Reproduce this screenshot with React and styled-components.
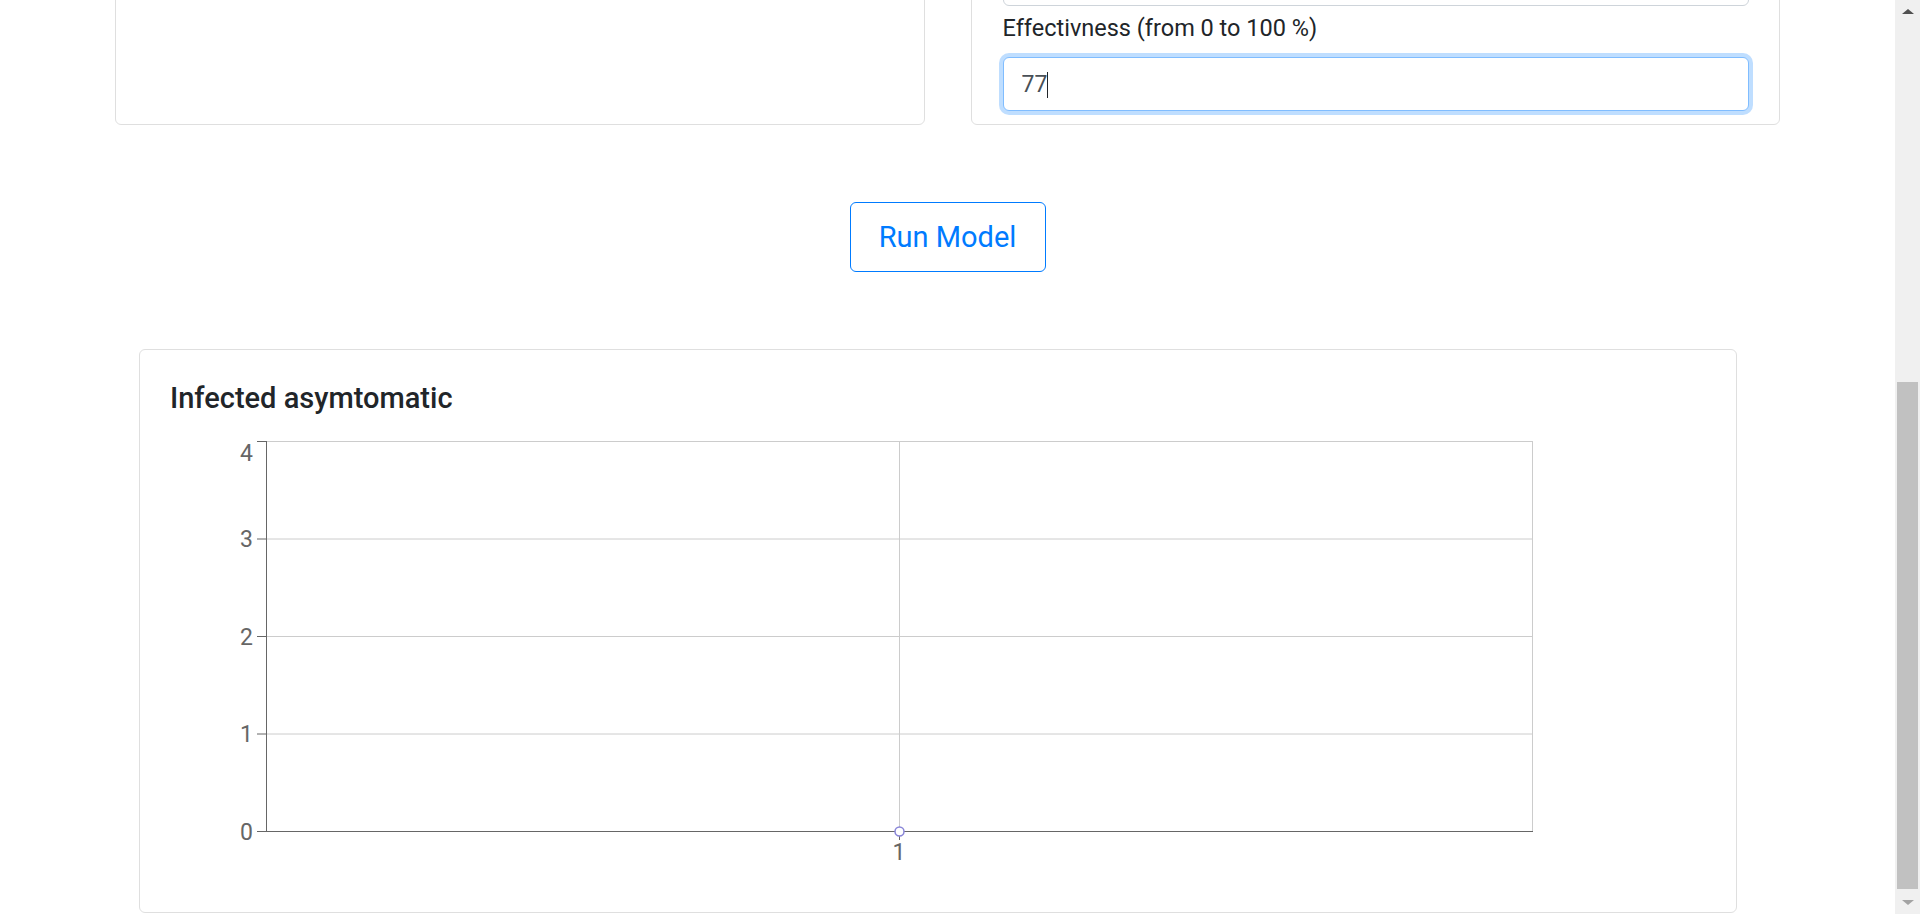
import { useLayoutEffect, useRef } from 'react';
import styled, { createGlobalStyle } from 'styled-components';

const GlobalStyle = createGlobalStyle`
  html, body {
    margin: 0;
    padding: 0;
    overflow: hidden;
    background: #fff;
  }
  body {
    font-family: 'Segoe UI', Roboto, 'Liberation Sans', sans-serif;
    color: #212529;
  }
  * {
    box-sizing: border-box;
  }
`;

const PLOT = { left: 96, right: 1362, top: 7, bottom: 397 };
const Y_TICKS = [0, 1, 2, 3, 4];
const X_TICKS = [1];

export default function App() {
  const scrollerRef = useRef(null);
  const rowRef = useRef(null);

  // page is scrolled so the bottom of the parameter cards sits at 125px
  useLayoutEffect(() => {
    const row = rowRef.current;
    scrollerRef.current.scrollTop = row.offsetTop + row.offsetHeight - 125;
  }, []);

  return (
    <>
      <GlobalStyle />
      <Window>
        <Scroller ref={scrollerRef}>
          <CardRow ref={rowRef}>
            <Card>
              <CardTitle>Population</CardTitle>
              <Label>Population size</Label>
              <Input defaultValue="1000" />
            </Card>
            <Card>
              <CardTitle>Vaccination</CardTitle>
              <Label>Start day</Label>
              <Input defaultValue="10" />
              <Label>Vaccinated per day</Label>
              <Input defaultValue="5" />
              <Label>Effectivness (from 0 to 100 %)</Label>
              <FocusBox>
                <Input defaultValue="77" focused />
                <Caret />
              </FocusBox>
            </Card>
          </CardRow>

          <ButtonRow>
            <RunButton>Run Model</RunButton>
          </ButtonRow>

          <ChartCard>
            <ChartTitle>Infected asymtomatic</ChartTitle>
            <Chart />
          </ChartCard>
        </Scroller>
        <Scrollbar>
          <ArrowUp />
          <Thumb />
          <ArrowDown />
        </Scrollbar>
      </Window>
    </>
  );
}

function Chart() {
  const h = PLOT.bottom - PLOT.top;
  const yOf = (v) => PLOT.bottom - (v * h) / 4;
  const xOf = () => (PLOT.left + PLOT.right) / 2;

  return (
    <ChartSvg width="1400" height="440" viewBox="0 0 1400 440">
      <g stroke="#ccc" strokeWidth="1" fill="none">
        {Y_TICKS.map((v) => (
          <line key={v} x1={PLOT.left} x2={PLOT.right} y1={yOf(v) + 0.5} y2={yOf(v) + 0.5} />
        ))}
        {X_TICKS.map((v) => (
          <line key={v} x1={xOf(v) + 0.5} x2={xOf(v) + 0.5} y1={PLOT.top} y2={PLOT.bottom} />
        ))}
        <line x1={PLOT.right + 0.5} x2={PLOT.right + 0.5} y1={PLOT.top} y2={PLOT.bottom} />
      </g>

      <g stroke="#666" strokeWidth="1">
        <line x1={PLOT.left + 0.5} x2={PLOT.left + 0.5} y1={PLOT.top} y2={PLOT.bottom + 1} />
        <line x1={PLOT.left} x2={PLOT.right + 1} y1={PLOT.bottom + 0.5} y2={PLOT.bottom + 0.5} />
        {Y_TICKS.map((v) => (
          <line key={v} x1={PLOT.left - 9} x2={PLOT.left} y1={yOf(v) + 0.5} y2={yOf(v) + 0.5} />
        ))}
        {X_TICKS.map((v) => (
          <line key={v} x1={xOf(v) + 0.5} x2={xOf(v) + 0.5} y1={PLOT.bottom} y2={PLOT.bottom + 9} />
        ))}
      </g>

      <g fill="#666" fontSize="23">
        {Y_TICKS.map((v) => (
          <text
            key={v}
            x={PLOT.left - 13}
            y={v === 4 ? yOf(v) + 12 : yOf(v) + 1}
            textAnchor="end"
            dominantBaseline="central"
          >
            {v}
          </text>
        ))}
        {X_TICKS.map((v) => (
          <text key={v} x={xOf(v)} y={PLOT.bottom + 21} textAnchor="middle" dominantBaseline="central">
            {v}
          </text>
        ))}
      </g>

      <circle cx={xOf(1) + 0.5} cy={PLOT.bottom + 0.5} r="4.5" fill="#fff" stroke="#8884d8" strokeWidth="1.5" />
    </ChartSvg>
  );
}

const Window = styled.div`
  display: flex;
  width: 100vw;
  height: 100vh;
`;

const Scroller = styled.div`
  position: relative;
  flex: 1;
  height: 100%;
  overflow-y: scroll;
  scrollbar-width: none;
  &::-webkit-scrollbar {
    display: none;
  }
`;

const CardRow = styled.div`
  display: flex;
  gap: 46px;
  padding: 40px 115px 0;
`;

const Card = styled.div`
  flex: 1;
  display: flex;
  flex-direction: column;
  border: 1px solid #dfdfdf;
  border-radius: 6px;
  padding: 31px 30px 13px 31px;
`;

const CardTitle = styled.div`
  font-size: 30px;
  font-weight: 500;
  line-height: 36px;
  margin-bottom: 18px;
`;

const Label = styled.label`
  display: block;
  font-size: 23.5px;
  line-height: 36px;
  margin-top: 4px;
  margin-bottom: 11px;
  color: #212529;
`;

const FocusBox = styled.div`
  position: relative;
`;

const Input = styled.input`
  display: block;
  width: 100%;
  height: 54px;
  padding: 0 18px;
  font-family: inherit;
  font-size: 23px;
  color: #495057;
  background: #fff;
  border: 1px solid ${(props) => (props.focused ? '#80bdff' : '#ced4da')};
  border-radius: 6px;
  outline: none;
  box-shadow: ${(props) => (props.focused ? '0 0 0 4px rgba(0, 123, 255, 0.25)' : 'none')};
`;

const Caret = styled.span`
  position: absolute;
  left: 44px;
  top: 15px;
  width: 1px;
  height: 26px;
  background: #212529;
`;

const ButtonRow = styled.div`
  display: flex;
  justify-content: center;
  margin-top: 77px;
`;

const RunButton = styled.button`
  width: 196px;
  height: 70px;
  font-family: inherit;
  font-size: 29px;
  font-weight: 400;
  color: #007bff;
  background: transparent;
  border: 1px solid #007bff;
  border-radius: 6px;
  cursor: pointer;
`;

const ChartCard = styled.div`
  margin: 77px 158px 30px 139px;
  height: 564px;
  border: 1px solid #dfdfdf;
  border-radius: 6px;
  padding: 30px;
`;

const ChartTitle = styled.h5`
  margin: 0 0 18px;
  font-size: 29px;
  font-weight: 500;
  line-height: 36px;
  color: #212529;
`;

const ChartSvg = styled.svg`
  display: block;
  font-family: 'Segoe UI', Roboto, 'Liberation Sans', sans-serif;
`;

const Scrollbar = styled.div`
  width: 25px;
  height: 100%;
  display: flex;
  flex-direction: column;
  align-items: center;
  background: #f0f0f0;
`;

const ArrowUp = styled.div`
  width: 0;
  height: 0;
  margin: 9px 0 11px;
  border-left: 6px solid transparent;
  border-right: 6px solid transparent;
  border-bottom: 5px solid #505050;
`;

const Thumb = styled.div`
  width: 21px;
  height: 507px;
  margin-top: 357px;
  background: #c1c1c1;
`;

const ArrowDown = styled.div`
  width: 0;
  height: 0;
  margin-top: auto;
  margin-bottom: 9px;
  border-left: 6px solid transparent;
  border-right: 6px solid transparent;
  border-top: 5px solid #a3a3a3;
`;
